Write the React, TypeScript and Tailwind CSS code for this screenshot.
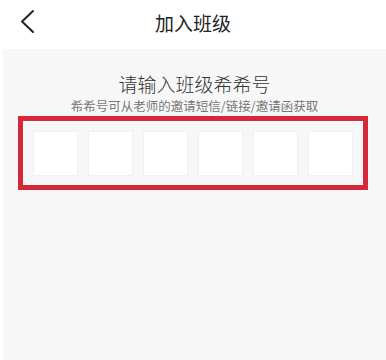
export default function App() {
  const slots = [0, 1, 2, 3, 4, 5];
  return (
    <div
      className="flex h-[360px] w-[386px] flex-col bg-white"
      style={{ fontFamily: '"Noto Sans CJK SC", "Noto Sans", sans-serif' }}
    >
      {/* header */}
      <div className="relative flex h-[49px] items-center justify-center">
        <svg
          className="absolute left-[19px] top-[9px]"
          width="17"
          height="26"
          viewBox="0 0 17 26"
          fill="none"
        >
          <path d="M14 2 L3 12.5 L14 23" stroke="#222" strokeWidth="2" strokeLinecap="round" strokeLinejoin="round" />
        </svg>
        <h1 className="mt-[-4px] text-[19px] leading-none text-[#222]">加入班级</h1>
      </div>

      {/* body */}
      <div className="ml-[3px] flex flex-1 flex-col items-center bg-[#f7f7f7]">
        <p className="mt-[24px] text-[19px] leading-[22px] font-light text-[#333]">请输入班级希希号</p>
        <p className="mt-[4px] text-[12.5px] leading-[14px] text-[#777]">希希号可从老师的邀请短信/链接/邀请函获取</p>
        <div className="mt-[3px] mr-[3px] flex h-[74px] w-[350px] items-center gap-[10px] border-[5px] border-[#d3293a] px-[10px]">
          {slots.map((i) => (
            <div
              key={i}
              className="h-[45px] w-[45px] border border-[#f1f1f1] bg-white"
            />
          ))}
        </div>
      </div>
    </div>
  );
}
